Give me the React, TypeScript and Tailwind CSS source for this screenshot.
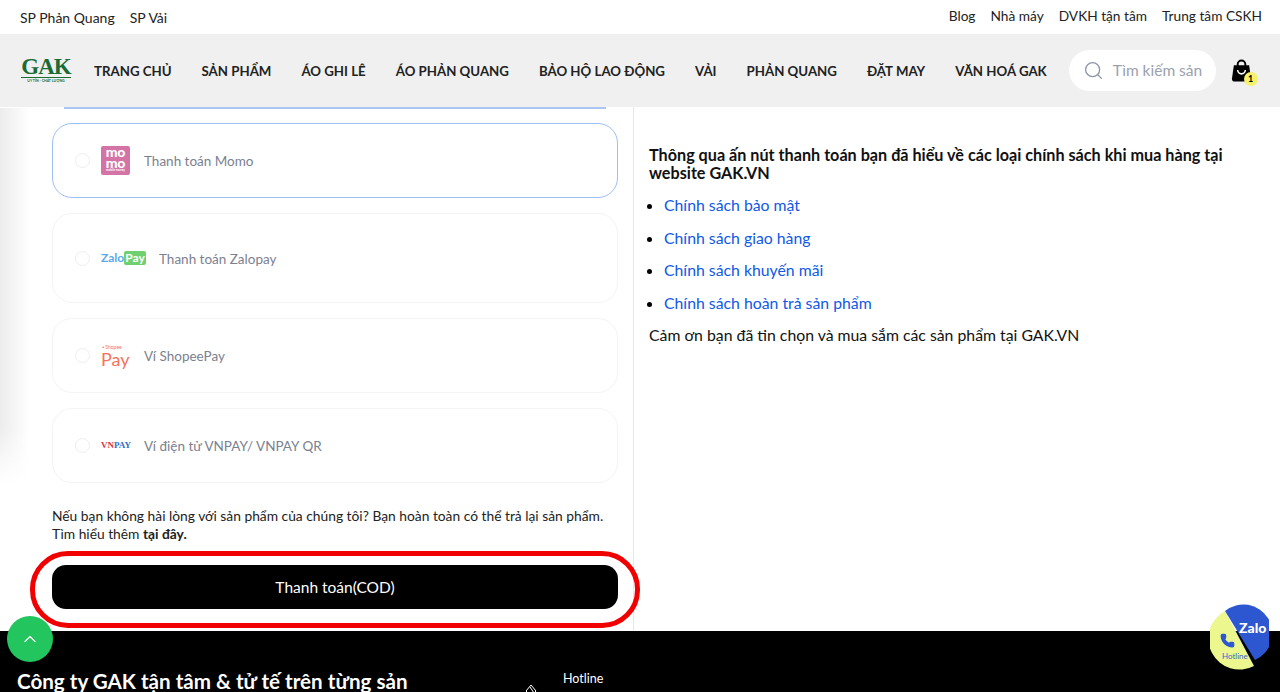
import React from 'react';
import { ChevronUp, Phone, Search } from 'lucide-react';

const font = { fontFamily: '"Lato", "Noto Sans", sans-serif' };

const navItems = ['TRANG CHỦ', 'SẢN PHẨM', 'ÁO GHI LÊ', 'ÁO PHẢN QUANG', 'BẢO HỘ LAO ĐỘNG', 'VẢI', 'PHẢN QUANG', 'ĐẶT MAY', 'VĂN HOÁ GAK'];
const policies = ['Chính sách bảo mật', 'Chính sách giao hàng', 'Chính sách khuyến mãi', 'Chính sách hoàn trả sản phẩm'];

const MomoLogo = () => (
  <div className="w-[29px] h-[29px] rounded-[2px] bg-[#d474a6] flex flex-col items-center text-white font-black text-[14px] leading-[11px] tracking-[-0.2px]">
    <span>mo</span>
    <span>mo</span>
    <span className="text-[3px] leading-[4px] tracking-normal font-bold">mobile money</span>
  </div>
);

const ZaloLogo = () => (
  <div className="w-[44px] flex items-center text-[12px] font-bold leading-none">
    <span className="text-[#5aa9ee]">Zalo</span>
    <span className="bg-[#6fd06f] text-white rounded-[2px] px-[1px] py-[1px]">Pay</span>
  </div>
);

const ShopeeLogo = () => (
  <div className="flex flex-col text-[#f5735c] leading-none w-[29px]">
    <span className="text-[5px] leading-[6px] pl-[1px] whitespace-nowrap">▪ Shopee</span>
    <span className="text-[18px] leading-[18px]">Pay</span>
  </div>
);

const VnpayLogo = () => (
  <div className="text-[9px] font-bold leading-none w-[29px]" style={{ fontFamily: '"Liberation Serif", serif' }}>
    <span className="text-[#d8363f]">VN</span>
    <span className="text-[#2f6fc4]">PAY</span>
  </div>
);

const PaymentCard: React.FC<{ logo: React.ReactNode; label: string; active?: boolean; tall?: boolean }> = ({ logo, label, active, tall }) => (
  <div className={`flex items-center rounded-[20px] pl-[22px] ${tall ? 'h-[90px]' : 'h-[75px]'} ${active ? 'border-[1.5px] border-[#9cbff7]' : 'border-[1.5px] border-[#f3f4f6]'}`}>
    <span className="w-[15px] h-[15px] rounded-full border border-[#eceef1] mr-[11px]" />
    {logo}
    <span className="ml-[14px] text-[13.5px] pt-[2px] text-[#7b8190]">{label}</span>
  </div>
);

const HotlineBadge = () => (
  <div className="absolute left-[1210px] top-[604px] w-[59px] h-[66px]">
    <svg viewBox="0 0 59 66" className="w-full h-full">
      <path d="M44 62 A31 31 0 0 1 15 7 Z" fill="#ecf78e" />
      <path d="M15 7 A29 29 0 1 1 45 56 Z" fill="#2d57d0" />
    </svg>
    <span className="absolute left-[29px] top-[17px] text-white text-[14px] font-black leading-none">Zalo</span>
    <Phone className="absolute left-[10px] top-[29px] w-[15px] h-[15px] text-[#2d57d0] fill-[#2d57d0]" />
    <span className="absolute left-[12px] top-[48px] text-[#3f64cf] text-[8px] leading-none">Hotline</span>
  </div>
);

export default function App() {
  return (
    <div className="relative w-[1280px] h-[692px] overflow-hidden bg-white text-black" style={font}>
      <div className="h-[34px] flex items-center justify-between px-[20px] pr-[18px] text-[#222]">
        <div className="flex gap-[15px] text-[14px]">
          <span>SP Phản Quang</span>
          <span>SP Vải</span>
        </div>
        <div className="flex gap-[15px] -mt-[2px] text-[13.7px]">
          <span>Blog</span>
          <span>Nhà máy</span>
          <span>DVKH tận tâm</span>
          <span>Trung tâm CSKH</span>
        </div>
      </div>

      <div className="h-[73px] bg-[#f0f0f0] flex items-center pl-[21px]">
        <div className="w-[50px] flex flex-col items-center text-[#1b6b34] mr-[23px] -mt-[2px]">
          <span className="text-[23px] leading-[21px] font-bold tracking-[-1px]" style={{ fontFamily: '"Liberation Serif", serif' }}>GAK</span>
          <span className="w-full border-t border-[#1b6b34] text-[3.5px] font-bold leading-[6px] text-center whitespace-nowrap">UY TÍN - CHẤT LƯỢNG</span>
        </div>
        <nav className="flex gap-[30px] pt-[2px] text-[13.25px] font-bold text-[#222] whitespace-nowrap">
          {navItems.map((item) => (
            <span key={item}>{item}</span>
          ))}
        </nav>
        <div className="ml-[22px] w-[147px] h-[41px] rounded-full bg-white flex items-center pl-[14px] overflow-hidden shrink-0">
          <Search className="w-[21px] h-[21px] text-[#8d95a6] shrink-0" strokeWidth={1.5} />
          <span className="ml-[9px] text-[15.5px] text-[#9aa1b0] whitespace-nowrap">Tìm kiếm sản</span>
        </div>
        <div className="relative ml-[15px] w-[21px] h-[24px] shrink-0">
          <svg viewBox="0 0 22 24" className="w-full h-full">
            <path d="M7 7 V5 a4 4 0 0 1 8 0 V7" stroke="#000" strokeWidth="2" fill="none" />
            <path d="M3 6 H19 L21 20 a3 3 0 0 1 -3 3 H4 a3 3 0 0 1 -3 -3 Z" fill="#000" />
            <path d="M7 11 a4 4 0 0 0 8 0" stroke="#fff" strokeWidth="1.6" fill="none" />
          </svg>
          <span className="absolute -right-[6px] -bottom-[3px] w-[14px] h-[14px] rounded-full bg-[#f5f36b] text-[9px] font-bold flex items-center justify-center leading-none">1</span>
        </div>
      </div>

      <div className="flex h-[524px]">
        <div className="w-[634px] border-r border-[#e5e7eb] pl-[52px] pr-[15px]">
          <div className="h-[2px] mx-[12px] bg-[#a9c6f5]" />
          <div className="mt-[14px] flex flex-col gap-[15px]">
            <PaymentCard logo={<MomoLogo />} label="Thanh toán Momo" active />
            <PaymentCard logo={<ZaloLogo />} label="Thanh toán Zalopay" tall />
            <PaymentCard logo={<ShopeeLogo />} label="Ví ShopeePay" />
            <PaymentCard logo={<VnpayLogo />} label="Ví điện tử VNPAY/ VNPAY QR" />
          </div>
          <p className="mt-[24px] text-[13.8px] leading-[18px] text-[#222]">
            Nếu bạn không hài lòng với sản phẩm của chúng tôi? Bạn hoàn toàn có thể trả lại sản phẩm. Tìm hiểu thêm <b>tại đây.</b>
          </p>
          <button className="mt-[22px] w-full h-[44px] pt-[1px] rounded-[14px] bg-black text-white text-[15.5px]">Thanh toán(COD)</button>
        </div>
        <div className="flex-1 pl-[15px] pr-[40px] pt-[39px] text-[15.8px] text-[#111]">
          <p className="font-bold text-[16.2px] leading-[18px]">Thông qua ấn nút thanh toán bạn đã hiểu về các loại chính sách khi mua hàng tại website GAK.VN</p>
          <ul className="mt-[13px] list-disc pl-[15px] flex flex-col gap-[12px] leading-[20.5px] marker:text-black">
            {policies.map((p) => (
              <li key={p} className="text-[#1058e8]">{p}</li>
            ))}
          </ul>
          <p className="mt-[12px] leading-[20px]">Cảm ơn bạn đã tin chọn và mua sắm các sản phẩm tại GAK.VN</p>
        </div>
      </div>

      <div className="h-[61px] bg-black text-white flex pl-[17px] pt-[38px] overflow-hidden">
        <h2 className="w-[508px] shrink-0 text-[20.6px] font-bold leading-[24px] whitespace-nowrap">Công ty GAK tận tâm &amp; tử tế trên từng sản</h2>
        <svg viewBox="0 0 12 12" className="w-[12px] h-[12px] mt-[15px] mr-[26px] shrink-0">
          <path d="M6 1 L11 7 L6 12 L1 7 Z M5 3 L9 9" stroke="#fff" strokeWidth="1" fill="none" />
        </svg>
        <span className="text-[12.5px] mt-[1px] h-fit">Hotline</span>
      </div>

      <div className="absolute left-0 top-[108px] w-[30px] h-[375px] bg-linear-to-r from-[#ececec] to-transparent [mask-image:linear-gradient(to_bottom,black_85%,transparent)]" />
      <div className="absolute left-[30px] top-[551px] w-[610px] h-[77px] rounded-[38px] border-[5px] border-[#f00000]" />
      <div className="absolute left-[7px] top-[616px] w-[46px] h-[46px] rounded-full bg-[#22c55e] flex items-center justify-center">
        <ChevronUp className="w-[20px] h-[20px] text-white" strokeWidth={1.5} />
      </div>
      <HotlineBadge />
    </div>
  );
}
